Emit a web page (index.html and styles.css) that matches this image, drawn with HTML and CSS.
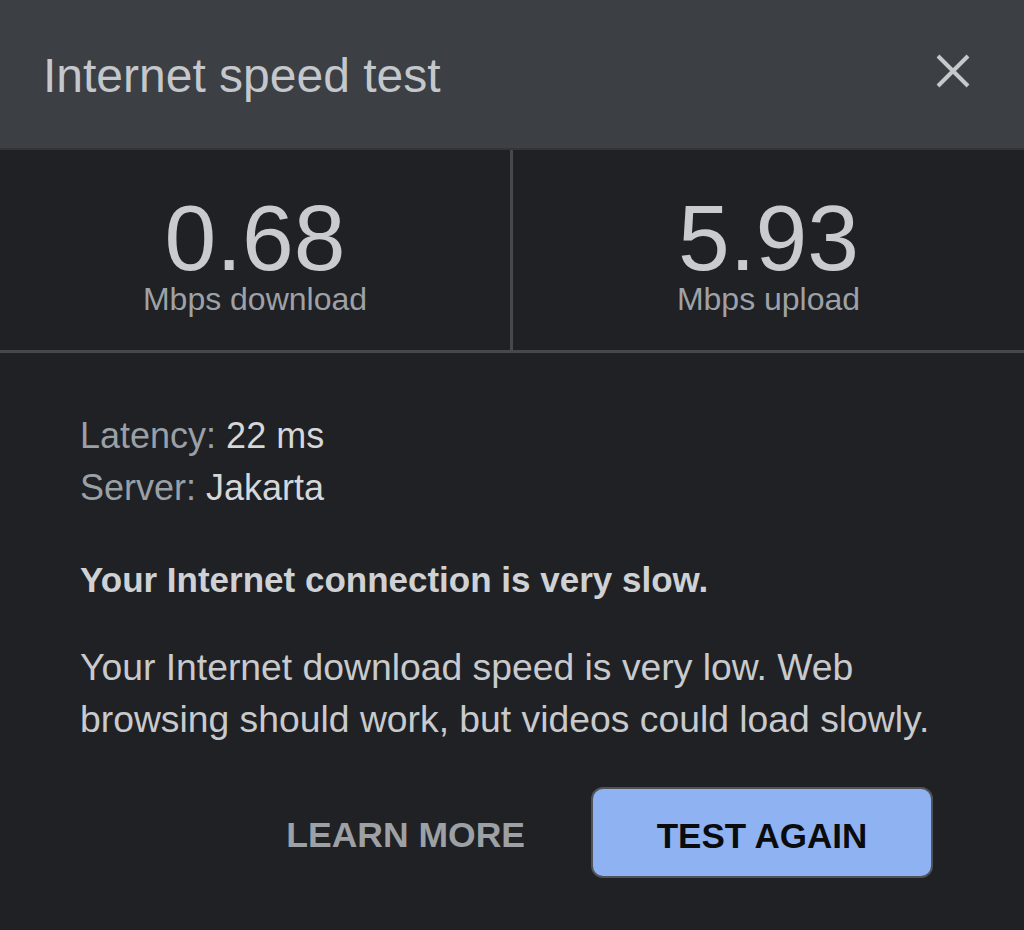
FILE: index.html
```html
<!DOCTYPE html>
<html lang="en">
<head>
<meta charset="utf-8">
<title>Internet speed test</title>
<link rel="stylesheet" href="styles.css">
</head>
<body>
<div class="dialog">
  <header class="header">
    <h1 class="title">Internet speed test</h1>
    <button class="close" aria-label="Close">
      <svg width="36" height="36" viewBox="0 0 36 36"><path d="M3 3 L33 33 M33 3 L3 33" stroke="#c6c9cc" stroke-width="4" fill="none"/></svg>
    </button>
  </header>
  <section class="stats">
    <div class="stat">
      <div class="value">0.68</div>
      <div class="unit">Mbps download</div>
    </div>
    <div class="divider"></div>
    <div class="stat">
      <div class="value">5.93</div>
      <div class="unit">Mbps upload</div>
    </div>
  </section>
  <section class="content">
    <div class="meta">
      <div class="meta-line"><span class="meta-label">Latency:</span> <span class="meta-value">22 ms</span></div>
      <div class="meta-line"><span class="meta-label">Server:</span> <span class="meta-value">Jakarta</span></div>
    </div>
    <p class="verdict">Your Internet connection is very slow.</p>
    <p class="desc">Your Internet download speed is very low. Web browsing should work, but videos could load slowly.</p>
    <div class="actions">
      <button class="btn-text">LEARN MORE</button>
      <button class="btn-primary">TEST AGAIN</button>
    </div>
  </section>
</div>
</body>
</html>
```
FILE: styles.css
```css
html, body {
  margin: 0;
  padding: 0;
  background: #202124;
}
body {
  font-family: "Liberation Sans", Arial, Helvetica, sans-serif;
  width: 1024px;
  height: 930px;
  overflow: hidden;
}
.dialog {
  display: flex;
  flex-direction: column;
}
.header {
  height: 148px;
  background: #3c3f43;
  border-bottom: 2px solid #333538;
  display: flex;
  align-items: center;
  justify-content: space-between;
  padding: 0 53px 0 43px;
}
.title {
  margin: 0;
  padding-top: 4px;
  font-size: 48px;
  font-weight: 400;
  line-height: 1;
  color: #c4c7cb;
}
.close {
  background: none;
  border: 0;
  padding: 0;
  margin-bottom: 6px;
  width: 36px;
  height: 36px;
  display: block;
}
.close svg { display: block; }
.stats {
  display: flex;
  height: 200px;
  border-bottom: 3px solid #45484c;
}
.divider {
  width: 3px;
  background: #45484c;
}
.stat {
  flex: 1;
  display: flex;
  flex-direction: column;
  align-items: center;
  padding-top: 43px;
}
.stat:first-child { flex: 0 0 510px; }
.value {
  font-size: 93px;
  line-height: 91px;
  color: #c9cbce;
}
.unit {
  font-size: 32px;
  line-height: 30px;
  color: #9ea2a7;
}
.content {
  padding: 57px 80px 0 80px;
}
.meta-line {
  font-size: 36px;
  line-height: 52px;
}
.meta-label { color: #9aa0a6; }
.meta-value { color: #d5d7da; }
.verdict {
  margin: 40px 0 0 0;
  font-size: 35px;
  font-weight: 700;
  line-height: 52px;
  color: #cfd1d4;
}
.desc {
  margin: 35px 0 0 0;
  font-size: 37.3px;
  line-height: 52px;
  color: #c8cacd;
}
.actions {
  margin-top: 42px;
  padding-right: 11px;
  display: flex;
  justify-content: flex-end;
  align-items: center;
  gap: 66px;
}
.btn-text {
  background: none;
  border: 0;
  padding: 6px 0 0 0;
  font-family: inherit;
  font-size: 35.5px;
  font-weight: 700;
  line-height: 1;
  color: #9da1a6;
}
.btn-primary {
  box-sizing: border-box;
  width: 342px;
  height: 91px;
  background: #8fb2f2;
  border: 2px solid #4f5358;
  border-radius: 12px;
  padding: 5px 0 0 0;
  font-family: inherit;
  font-size: 35px;
  font-weight: 700;
  line-height: 1;
  color: #0a0b0d;
}
```
